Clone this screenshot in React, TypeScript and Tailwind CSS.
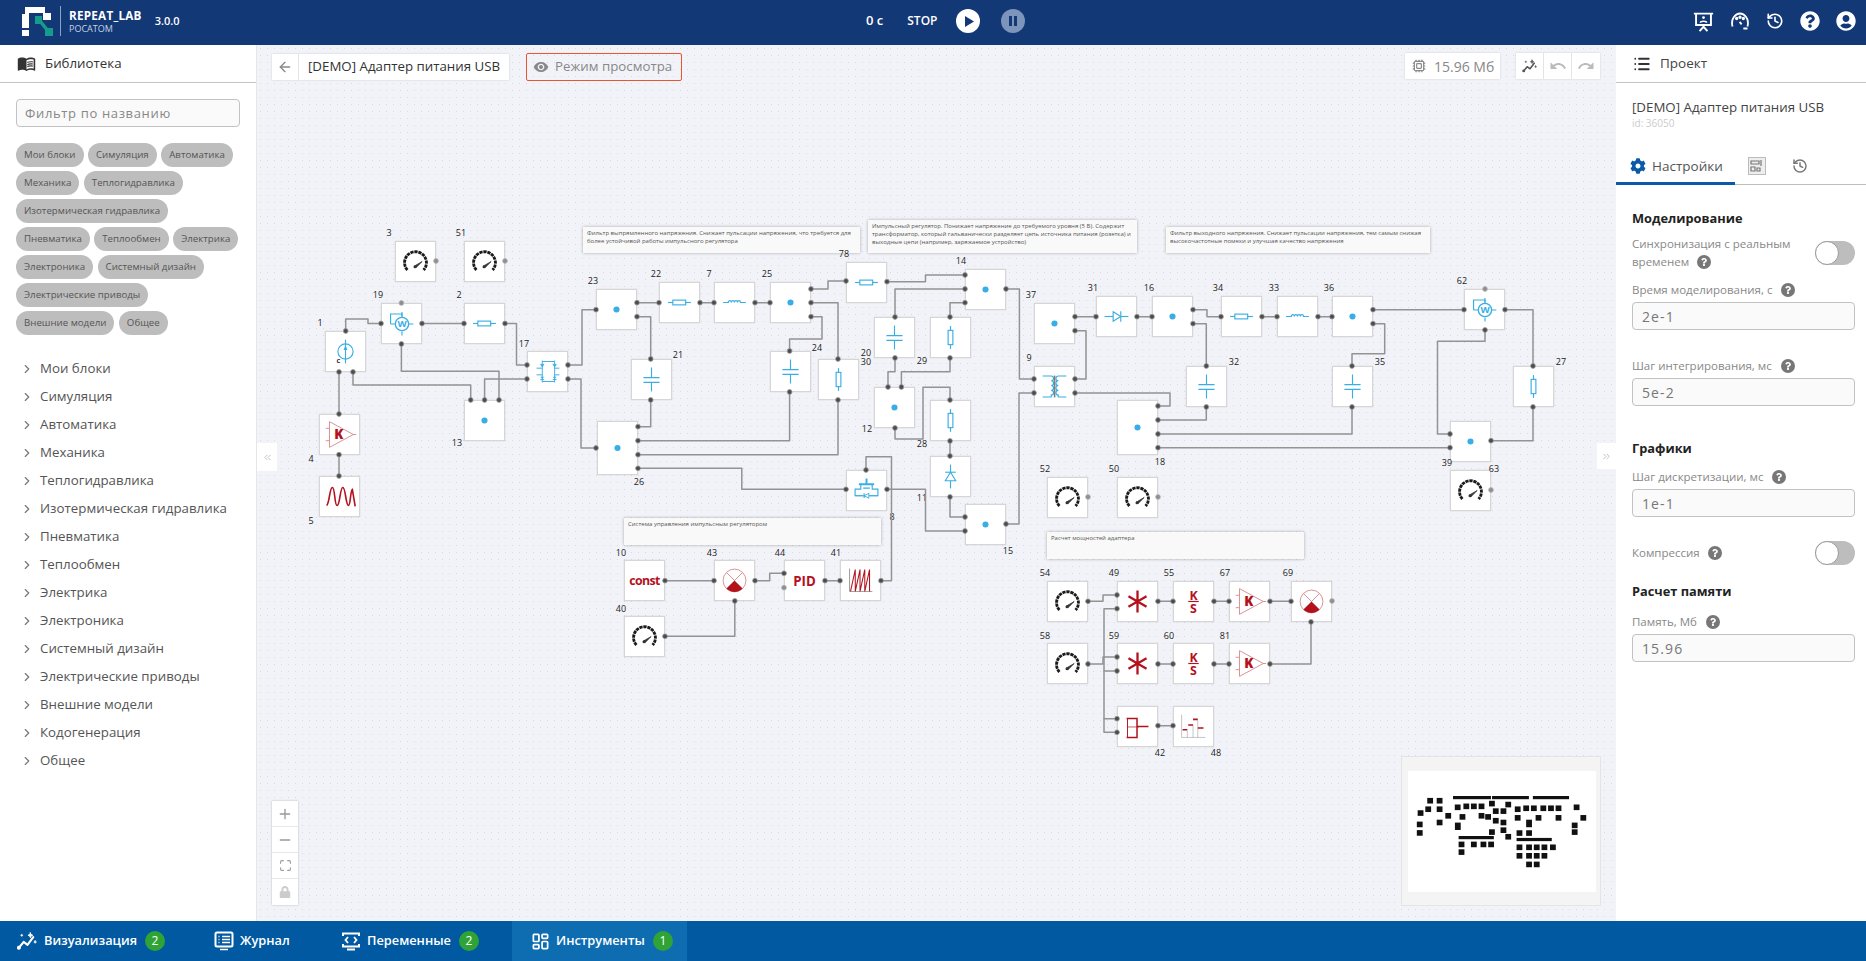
import React from 'react';
import {
  ArrowLeft,
  ChevronRight,
  ChevronsLeft,
  ChevronsRight,
  Cpu,
  History,
  LayoutDashboard,
  List,
  Maximize,
  Minus,
  Plus,
} from 'lucide-react';
import { FaQuestionCircle, FaUserCircle, FaCog, FaQuestion, FaLock } from 'react-icons/fa';
import { MdMenuBook, MdRedo, MdUndo, MdVisibility } from 'react-icons/md';

const OX = 257;
const OY = 45;
const BLUE = '#39aee4';
const RED = '#b3121d';
const PINK = '#d68f92';

const chips = [
  'Мои блоки', 'Симуляция', 'Автоматика', 'Механика', 'Теплогидравлика', 'Изотермическая гидравлика',
  'Пневматика', 'Теплообмен', 'Электрика', 'Электроника', 'Системный дизайн', 'Электрические приводы',
  'Внешние модели', 'Общее',
];

const tree = [
  'Мои блоки', 'Симуляция', 'Автоматика', 'Механика', 'Теплогидравлика', 'Изотермическая гидравлика',
  'Пневматика', 'Теплообмен', 'Электрика', 'Электроника', 'Системный дизайн', 'Электрические приводы',
  'Внешние модели', 'Кодогенерация', 'Общее',
];

const Spark = ({ className }: { className?: string }) => (
  <svg viewBox="0 0 22 20" className={className} fill="none" stroke="currentColor" strokeWidth="2.2" strokeLinecap="round" strokeLinejoin="round">
    <path d="M2 17l5-6 4 3 6-8" />
    <circle cx="2" cy="17" r="1" />
    <path d="M14 1.5l.7 1.8 1.8.7-1.8.7-.7 1.8-.7-1.8-1.8-.7 1.8-.7z" strokeWidth="1" fill="currentColor" />
    <path d="M5 3v2M4 4h2" strokeWidth="1" />
    <path d="M19 9.500l.5 1 1 .5-1 .5-.5 1-.5-1-1-.5 1-.5z" strokeWidth=".6" fill="currentColor" />
  </svg>
);

type IconProps = { kind: string };

const L = (p: { d: string; c?: string; w?: number; f?: string }) => (
  <path d={p.d} stroke={p.c ?? BLUE} strokeWidth={p.w ?? 1.2} fill={p.f ?? 'none'} />
);

const NodeIcon = ({ kind }: IconProps) => {
  switch (kind) {
    case 'dot':
      return <circle cx="20.5" cy="20.5" r="3.2" fill={BLUE} />;
    case 'gauge':
      return (
        <g>
          <path d="M12 29.5A11.5 11.5 0 1 1 29 29.5" fill="none" stroke="#1a1a1a" strokeWidth="3" strokeDasharray="3.4 .8" />
          <path d="M19 25.5L27.500 20.5L21 27z" fill="#333" stroke="#333" strokeWidth=".8" />
          <circle cx="20" cy="26" r="1.6" fill="#333" />
        </g>
      );
    case 'res':
      return (
        <g>
          <L d="M8.5 20.5H32.5" />
          <rect x="13.5" y="18" width="13.5" height="5" fill="#fff" stroke={BLUE} strokeWidth="1.2" />
        </g>
      );
    case 'resV':
      return (
        <g>
          <L d="M20.5 8.5V32.5" />
          <rect x="18" y="13" width="5" height="15" fill="#fff" stroke={BLUE} strokeWidth="1.2" />
        </g>
      );
    case 'ind':
      return <L d="M8.5 20.5H14a1.6 2 0 0 1 3.2 0a1.6 2 0 0 1 3.2 0a1.6 2 0 0 1 3.2 0a1.6 2 0 0 1 3.2 0H32.5" />;
    case 'cap':
      return (
        <g>
          <L d="M20.5 8V18.500M20.5 23.500V33" />
          <L d="M12 18.500H29M12 23.500H29" w={1.4} />
        </g>
      );
    case 'diodeH':
      return (
        <g>
          <L d="M8 20.5H33" />
          <path d="M17 15.5L25 20.5L17 25.5z" fill="#fff" stroke={BLUE} strokeWidth="1.2" />
          <L d="M25 15V26" />
        </g>
      );
    case 'diodeV':
      return (
        <g>
          <L d="M20.5 8V33" />
          <path d="M20.5 16L26 25H15z" fill="#fff" stroke={BLUE} strokeWidth="1.2" />
          <L d="M15 16H26" />
        </g>
      );
    case 'source':
      return (
        <g>
          <circle cx="20.5" cy="20.5" r="8" fill="#fff" stroke={BLUE} strokeWidth="1.2" />
          <L d="M20.5 8V33" />
          <path d="M20.5 14L18.5 19H22.5z" fill={BLUE} />
          <text x="11" y="33" fontSize="8" fill="#111" fontWeight="600">c</text>
        </g>
      );
    case 'watt':
      return (
        <g>
          <L d="M9 21H33M21 8.5V13M21 29V33" />
          <L d="M9 21V10.5H21V14" />
          <circle cx="21" cy="21" r="7" fill="#fff" stroke={BLUE} strokeWidth="1.4" />
          <text x="21" y="24.5" fontSize="10" fontWeight="700" fill={BLUE} textAnchor="middle">W</text>
        </g>
      );
    case 'bridge':
      return (
        <g>
          <L d="M15 10H28M15 31H28M15 9V32M28 9V32M9 17H15M9 24H15M28 17H33M28 24H33" w={1} />
          <path d="M13 13.500h4l-2 2.500zM26 13.500h4l-2 2.500zM13 26h4l-2 2.500zM26 26h4l-2 2.500z" fill={BLUE} />
          <L d="M13 13H17M26 13H30M13 29H17M26 29H30" w={1} />
        </g>
      );
    case 'trans':
      return (
        <g>
          <L d="M8 9.500H17M17 9.500a2.500 2.500 0 0 1 0 5a2.500 2.500 0 0 1 0 5a2.500 2.500 0 0 1 0 5a2.500 2.500 0 0 1 0 5a2.500 2.500 0 0 1 0 2H8" />
          <L d="M33 9.500H24.500M24.500 9.500a2.500 2.500 0 0 0 0 5a2.500 2.500 0 0 0 0 5a2.500 2.500 0 0 0 0 5a2.500 2.500 0 0 0 0 5a2.500 2.500 0 0 0 0 2H33" />
          <rect x="19.800" y="9" width="1.600" height="23" fill="#7d7d7d" />
        </g>
      );
    case 'fet':
      return (
        <g>
          <L d="M20.5 8V14M12.500 14H28.500" w={2} />
          <L d="M14.500 14V19H8.500V26H32.500V19H26.500V14M17 18H24" />
          <path d="M23 23.500L18 26L23 28.500z" fill="#fff" stroke={BLUE} strokeWidth="1" />
          <L d="M18 23.500V28.500M8.500 26H17M24 26H32.500" />
        </g>
      );
    case 'gain':
      return (
        <g>
          <L d="M6 14H10M6 27H10M34 20.500H38" c={PINK} w={1} />
          <path d="M10 7L35 20.500L10 34z" fill="#fff" stroke={PINK} strokeWidth="1" />
          <text x="15" y="25.500" fontSize="14" fontWeight="800" fill={RED}>K</text>
        </g>
      );
    case 'wave':
      return <L d="M7 30C10 28 10 11 13 11C16 11 15 30 18 30C21 30 21 11 24 11C27 11 27 30 30 30C32 30 32 14 34 13L37 31" c={RED} w={1.7} />;
    case 'const':
      return <text x="20.5" y="25" fontSize="13" fontWeight="700" fill={RED} textAnchor="middle" letterSpacing="-.7">const</text>;
    case 'pid':
      return <text x="20.5" y="26" fontSize="14" fontWeight="700" fill={RED} textAnchor="middle">PID</text>;
    case 'sum':
      return (
        <g>
          <circle cx="20.5" cy="20.5" r="12" fill="#fff" stroke={PINK} strokeWidth="1" />
          <L d="M12 12L20.5 20.5L29 12" c={PINK} w={1} />
          <path d="M20.5 20.5L12 29A12 12 0 0 0 29 29z" fill={RED} />
        </g>
      );
    case 'mul':
      return <L d="M20.5 9V32M11 15L30 26M30 15L11 26" c={RED} w={2.4} />;
    case 'ks':
      return (
        <g>
          <text x="20.5" y="18.5" fontSize="13" fontWeight="700" fill={RED} textAnchor="middle">K</text>
          <L d="M15 20.5H26" c={RED} w={1.2} />
          <text x="20.5" y="33" fontSize="13" fontWeight="700" fill={RED} textAnchor="middle">S</text>
        </g>
      );
    case 'saw':
      return (
        <g>
          <L d="M9 8V32H33" c="#555" w={.6} />
          <L d="M10 32L15 9V32L20 9V32L25 9V32L30 9V32" c={RED} w={1.1} />
        </g>
      );
    case 'quant':
      return (
        <g>
          <L d="M9 12H20V32H9M20 20.5H32" c={RED} w={1.6} />
          <L d="M10 12V32" c={RED} w={1} />
          <L d="M10 21H22" c={RED} w={.7} />
        </g>
      );
    case 'stair':
      return (
        <g>
          <L d="M8 8V32H33M14 32V25M20 32V19M25 32V14" c="#9a9a9a" w={.6} />
          <L d="M9 24H14M15 19H20M20 13H25M25 22H31" c={RED} w={1.6} />
        </g>
      );
    default:
      return null;
  }
};

// lx is the centre of the number, ly its vertical middle
type NodeT = { id: string; x: number; y: number; h?: number; lx: number; ly: number; k: string };

const nodes: NodeT[] = [
  { id: '3', x: 395, y: 241, lx: 389, ly: 233, k: 'gauge' },
  { id: '51', x: 464, y: 241, lx: 461, ly: 233, k: 'gauge' },
  { id: '19', x: 381, y: 303, lx: 378, ly: 295, k: 'watt' },
  { id: '2', x: 464, y: 303, lx: 459, ly: 295, k: 'res' },
  { id: '1', x: 325, y: 331, lx: 320, ly: 323, k: 'source' },
  { id: '17', x: 527, y: 351, lx: 524, ly: 344, k: 'bridge' },
  { id: '13', x: 464, y: 400, lx: 457, ly: 443, k: 'dot' },
  { id: '4', x: 319, y: 414, lx: 311, ly: 459, k: 'gain' },
  { id: '5', x: 319, y: 476, lx: 311, ly: 521, k: 'wave' },
  { id: '23', x: 596, y: 289, lx: 593, ly: 281, k: 'dot' },
  { id: '22', x: 659, y: 282, lx: 656, ly: 274, k: 'res' },
  { id: '7', x: 714, y: 282, lx: 709, ly: 274, k: 'ind' },
  { id: '25', x: 770, y: 282, lx: 767, ly: 274, k: 'dot' },
  { id: '78', x: 846, y: 262, lx: 844, ly: 254, k: 'res' },
  { id: '21', x: 631, y: 359, lx: 678, ly: 355, k: 'cap' },
  { id: '26', x: 597, y: 421, h: 54, lx: 639, ly: 482, k: 'dot' },
  { id: '24', x: 770, y: 351, lx: 817, ly: 348, k: 'cap' },
  { id: '20', x: 818, y: 359, lx: 866, ly: 353, k: 'resV' },
  { id: '8', x: 846, y: 470, lx: 892, ly: 517, k: 'fet' },
  { id: '14', x: 965, y: 269, lx: 961, ly: 261, k: 'dot' },
  { id: '30', x: 874, y: 317, lx: 866, ly: 362, k: 'cap' },
  { id: '29', x: 930, y: 317, lx: 922, ly: 361, k: 'resV' },
  { id: '12', x: 874, y: 387, lx: 867, ly: 429, k: 'dot' },
  { id: '28', x: 930, y: 400, lx: 922, ly: 444, k: 'resV' },
  { id: '11', x: 930, y: 456, lx: 922, ly: 498, k: 'diodeV' },
  { id: '15', x: 965, y: 504, lx: 1008, ly: 551, k: 'dot' },
  { id: '37', x: 1034, y: 303, lx: 1031, ly: 295, k: 'dot' },
  { id: '9', x: 1034, y: 366, lx: 1029, ly: 358, k: 'trans' },
  { id: '31', x: 1096, y: 296, lx: 1093, ly: 288, k: 'diodeH' },
  { id: '16', x: 1152, y: 296, lx: 1149, ly: 288, k: 'dot' },
  { id: '34', x: 1221, y: 296, lx: 1218, ly: 288, k: 'res' },
  { id: '33', x: 1277, y: 296, lx: 1274, ly: 288, k: 'ind' },
  { id: '36', x: 1332, y: 296, lx: 1329, ly: 288, k: 'dot' },
  { id: '62', x: 1464, y: 289, lx: 1462, ly: 281, k: 'watt' },
  { id: '32', x: 1186, y: 366, lx: 1234, ly: 362, k: 'cap' },
  { id: '35', x: 1332, y: 366, lx: 1380, ly: 362, k: 'cap' },
  { id: '27', x: 1513, y: 366, lx: 1561, ly: 362, k: 'resV' },
  { id: '18', x: 1117, y: 400, h: 55, lx: 1160, ly: 462, k: 'dot' },
  { id: '39', x: 1450, y: 421, lx: 1447, ly: 463, k: 'dot' },
  { id: '63', x: 1450, y: 470, lx: 1494, ly: 469, k: 'gauge' },
  { id: '52', x: 1047, y: 477, lx: 1045, ly: 469, k: 'gauge' },
  { id: '50', x: 1117, y: 477, lx: 1114, ly: 469, k: 'gauge' },
  { id: '10', x: 624, y: 560, lx: 621, ly: 553, k: 'const' },
  { id: '43', x: 714, y: 560, lx: 712, ly: 553, k: 'sum' },
  { id: '44', x: 784, y: 560, lx: 780, ly: 553, k: 'pid' },
  { id: '41', x: 840, y: 560, lx: 836, ly: 553, k: 'saw' },
  { id: '40', x: 624, y: 616, lx: 621, ly: 609, k: 'gauge' },
  { id: '54', x: 1047, y: 581, lx: 1045, ly: 573, k: 'gauge' },
  { id: '49', x: 1117, y: 581, lx: 1114, ly: 573, k: 'mul' },
  { id: '55', x: 1173, y: 581, lx: 1169, ly: 573, k: 'ks' },
  { id: '67', x: 1229, y: 581, lx: 1225, ly: 573, k: 'gain' },
  { id: '69', x: 1291, y: 581, lx: 1288, ly: 573, k: 'sum' },
  { id: '58', x: 1047, y: 643, lx: 1045, ly: 636, k: 'gauge' },
  { id: '59', x: 1117, y: 643, lx: 1114, ly: 636, k: 'mul' },
  { id: '60', x: 1173, y: 643, lx: 1169, ly: 636, k: 'ks' },
  { id: '81', x: 1229, y: 643, lx: 1225, ly: 636, k: 'gain' },
  { id: '42', x: 1117, y: 706, lx: 1160, ly: 753, k: 'quant' },
  { id: '48', x: 1173, y: 706, lx: 1216, ly: 753, k: 'stair' },
];

const comments = [
  { x: 583, y: 227, w: 277, h: 26, t: 'Фильтр выпрямленного напряжения. Снижает пульсации напряжения, что требуется для более устойчивой работы импульсного регулятора' },
  { x: 868, y: 220, w: 269, h: 33, t: 'Импульсный регулятор. Понижает напряжение до требуемого уровня (5 В). Содержит трансформатор, который гальванически разделяет цепь источника питания (розетка) и выходные цепи (например, заряжаемое устройство)' },
  { x: 1166, y: 227, w: 264, h: 26, t: 'Фильтр выходного напряжения. Снижает пульсации напряжения, тем самым снижая высокочастотные помехи и улучшая качество напряжения' },
  { x: 624, y: 518, w: 257, h: 27, t: 'Система управления импульсным регулятором' },
  { x: 1047, y: 532, w: 257, h: 27, t: 'Расчет мощностей адаптера' },
];

const wires = [
  'M345.7 331V319H368V323.5H381',
  'M422 323.5H464',
  'M505 323.5H516.5V365H527',
  'M527 379H484.6V400',
  'M401.4 344V371.3H499V400',
  'M353 372V385H470.7V400',
  'M339 372V414',
  'M339 454.7V476',
  'M568 365H582V309.7H596',
  'M568 379H581V448H596',
  'M637 302.7H659',
  'M700 302.7H714',
  'M755 302.7H770',
  'M811 289H828V281H846',
  'M811 302.7H838V359',
  'M811 316.7H822V339H789.6V351',
  'M637 316.7H650.7V359',
  'M650.7 400V426.7H638',
  'M789.6 392V440.7H638',
  'M838 400V454.7H638',
  'M638 468.3H741.8V489.3H846',
  'M887 281.7H925.5V275H965',
  'M965 289H895V317',
  'M965 302.7H950V317',
  'M895 358V371.7H888V387',
  'M950 358V371.7H901.4V387',
  'M895 428V439H923V387.3H950V400',
  'M950 441V456',
  'M950 497V517H965',
  'M887 489.3H925.5V531H965',
  'M866 470V456.7H891.5V580.7H881',
  'M1006 524H1019V393H1034',
  'M1006 289H1019.4V379H1034',
  'M1075 316.7H1096',
  'M1075 330.7H1086V379H1075',
  'M1075 393H1170V406H1158',
  'M1137 316.7H1152',
  'M1193 309.7H1207V316.7H1221',
  'M1193 323.7H1206.3V366',
  'M1262 316.7H1277',
  'M1318 316.7H1332',
  'M1373 309.7H1464',
  'M1373 323.7H1384.7V353.7H1352V366',
  'M1505 309.7H1533V366',
  'M1485 330V341.3H1437.5V434H1450',
  'M1206.3 407V420H1158',
  'M1352 407V434H1158',
  'M1158 447.7H1450',
  'M1533 407V440.7H1491',
  'M665 580.7H714',
  'M755 580.7H769.7V573.3H784',
  'M825 580.7H840',
  'M665 636.3H734.8V601',
  'M1088 601.3H1103V595H1117',
  'M1117 608.7H1104V732.3H1117',
  'M1088 664H1103V657H1117',
  'M1158 601.3H1173',
  'M1214 601.3H1229',
  'M1270 601.3H1291',
  'M1311 622V664H1270',
  'M1158 664H1173',
  'M1214 664H1229',
  'M1158 725.7H1173',
];

// start port only, the other end joins the bus
const tees = ['M1117 671H1104', 'M1117 718.7H1104'];

const freePorts = [
  [436, 261], [505, 261], [1088, 497], [1158, 497], [1491, 490], [1332, 601], [784, 587.7], [401.4, 303], [1485, 289],
];

const parsePath = (d: string) => {
  const pts: [number, number][] = [];
  let x = 0;
  let y = 0;
  for (const m of d.matchAll(/([MHV])([\d. ]+)/g)) {
    const v = m[2].trim().split(' ').map(Number);
    if (m[1] === 'M') { x = v[0]; y = v[1]; }
    if (m[1] === 'H') x = v[0];
    if (m[1] === 'V') y = v[0];
    pts.push([x, y]);
  }
  return pts;
};

const Diagram = () => (
  <>
    {comments.map((c) => (
      <div
        key={c.t}
        className="absolute bg-[#f9f9f9] shadow-[0_0_3px_rgba(0,0,0,0.3)] px-[4px] py-[2px] text-[6px] leading-[8px] text-[#555]"
        style={{ left: c.x - OX, top: c.y - OY, width: c.w, height: c.h }}
      >
        {c.t}
      </div>
    ))}
    {nodes.map((n) => (
      <React.Fragment key={n.id}>
        <div
          className="absolute bg-white border border-[#d6d6d6] shadow-[0_0_1px_rgba(0,0,0,0.2)]"
          style={{ left: n.x - OX, top: n.y - OY, width: 41, height: n.h ?? 41 }}
        >
          <svg viewBox="0 0 41 41" className="h-full w-full font-['Open_Sans',sans-serif]">
            <NodeIcon kind={n.k} />
          </svg>
        </div>
        <span
          className="absolute w-[16px] text-center text-[9px] leading-[8px] text-[#222]"
          style={{ left: n.lx - 8 - OX, top: n.ly - 4 - OY }}
        >
          {n.id}
        </span>
      </React.Fragment>
    ))}
    <svg className="absolute left-0 top-0 h-full w-full pointer-events-none" fill="none">
      <g transform={`translate(${-OX} ${-OY})`}>
        {wires.concat(tees).map((d) => (
          <path key={d} d={d} stroke="#939393" strokeWidth="1.5" strokeLinejoin="round" strokeLinecap="round" />
        ))}
        {wires.map((d) => {
          const p = parsePath(d);
          const a = p[0];
          const b = p[p.length - 1];
          return (
            <g key={d} fill="#4c4c4c" stroke="#9a9a9a" strokeWidth=".8">
              <circle cx={a[0]} cy={a[1]} r="2.4" />
              <circle cx={b[0]} cy={b[1]} r="2.4" />
            </g>
          );
        })}
        {tees.map((d) => {
          const a = parsePath(d)[0];
          return <circle key={d} cx={a[0]} cy={a[1]} r="2.4" fill="#4c4c4c" stroke="#9a9a9a" strokeWidth=".8" />;
        })}
        {freePorts.map(([x, y]) => (
          <circle key={`${x}-${y}`} cx={x} cy={y} r="2.4" fill="#8e8e8e" stroke="#b5b5b5" strokeWidth=".8" />
        ))}
      </g>
    </svg>
  </>
);

const MiniMap = () => {
  const k = 0.137;
  const mx = (x: number) => 1452 + (x - 583) * k - 1407;
  const my = (y: number) => 796 + (y - 227) * k - 771;
  return (
    <div className="absolute right-[15px] bottom-[15px] h-[150px] w-[200px] bg-[#f4f4f4] border border-[#e4e4e4] px-[6px] pt-[14px]">
      <svg className="h-[121px] w-[188px] bg-white">
        {nodes.map((n) => (
          <rect key={n.id} x={mx(n.x)} y={my(n.y)} width={5.8} height={(n.h ?? 41) * k} fill="#111" />
        ))}
        {comments.map((c) => (
          <rect key={c.t} x={mx(c.x)} y={my(c.y + c.h - 26)} width={c.w * k} height={3.2} fill="#111" />
        ))}
      </svg>
    </div>
  );
};

const Help = () => (
  <span className="inline-flex h-[14px] w-[14px] shrink-0 items-center justify-center rounded-full bg-[#777] text-white">
    <FaQuestion className="h-[8px] w-[8px]" />
  </span>
);

const Toggle = () => (
  <div className="h-[24px] w-[40px] shrink-0 rounded-full bg-[#bdbdbd] flex items-center">
    <div className="h-[24px] w-[24px] rounded-full bg-white border border-[#999]" />
  </div>
);

const Field = ({ label, value, mt }: { label: string; value: string; mt: string }) => (
  <div className={mt}>
    <div className="flex h-[18px] items-center gap-[9px] text-[11.5px] text-[#888]">
      {label}
      <Help />
    </div>
    <div className="mt-[3px] flex h-[28px] items-center rounded-[4px] border border-[#c2c2c2] bg-[#fafafa] pl-[9px] text-[14px] tracking-[0.08em] text-[#777]">
      {value}
    </div>
  </div>
);

const Section = ({ title, mt }: { title: string; mt: string }) => (
  <div className={`${mt} h-[20px] text-[12.8px] font-bold leading-[20px] text-[#222]`}>{title}</div>
);

const BottomTab = ({
  icon,
  label,
  badge,
  className,
}: {
  icon: React.ReactNode;
  label: string;
  badge?: number;
  className: string;
}) => (
  <div className={`flex h-full items-center text-[12.8px] font-semibold text-white ${className}`}>
    {icon}
    <span>{label}</span>
    {badge !== undefined && (
      <span className="ml-[8px] flex h-[20px] w-[20px] items-center justify-center rounded-full bg-[#2fa336] text-[12px] font-normal">
        {badge}
      </span>
    )}
  </div>
);

const App: React.FC = () => {
  return (
    <div className="flex h-screen w-full flex-col overflow-hidden bg-white font-['Open_Sans',sans-serif]">
      {/* Header */}
      <header className="relative flex h-[45px] shrink-0 items-center bg-[#133876] pb-[3px] text-white">
        <svg viewBox="0 0 32 32" className="ml-[22px] h-[32px] w-[32px]">
          <path d="M0 9h7v14H0zM3 2h20v6H7v2H3zM21 8h8v7h-8zM0 25h7v6H0z" fill="#fff" />
          <path d="M13 11h7v8h-7zM23 23h8v8h-8z" fill="#159c8c" />
          <path d="M18 16l8 10" stroke="#159c8c" strokeWidth="3.5" />
        </svg>
        <div className="ml-[6px] h-[30px] w-px bg-[#8ea3c4]" />
        <div className="ml-[8px] flex flex-col">
          <span className="text-[11.7px] font-bold leading-[15px] tracking-[0.02em]">REPEAT_LAB</span>
          <span className="text-[9px] leading-[11px] text-[#c8d3e4]">РОСАТОМ</span>
        </div>
        <span className="ml-[13px] text-[11px] font-semibold">3.0.0</span>
        <div className="absolute left-[866px] top-0 flex h-[42px] items-center">
          <span className="text-[13px] font-semibold">0 с</span>
          <span className="ml-[24px] text-[12px] font-semibold">STOP</span>
          <div className="ml-[19px] flex h-[24px] w-[24px] items-center justify-center rounded-full bg-white">
            <svg viewBox="0 0 10 12" className="ml-[2px] h-[11px] w-[9px]"><path d="M0 0l10 6-10 6z" fill="#133876" /></svg>
          </div>
          <div className="ml-[21px] flex h-[24px] w-[24px] items-center justify-center gap-[2px] rounded-full bg-[#7d94bb]">
            <span className="h-[10px] w-[3px] bg-[#133876]" />
            <span className="h-[10px] w-[3px] bg-[#133876]" />
          </div>
        </div>
        <div className="absolute right-[10px] top-0 flex h-[42px] items-center gap-[16px]">
          <svg viewBox="0 0 24 24" className="h-[21px] w-[21px]" fill="none" stroke="currentColor" strokeWidth="2.2">
            <path d="M1 3h22M3.500 3v13h17V3M12 16v2M7.500 23l4.500-5 4.500 5" />
            <circle cx="12" cy="7.500" r="1.600" fill="currentColor" stroke="none" />
            <path d="M8.500 13.500c0-2.500 7-2.500 7 0" strokeWidth="1.800" />
          </svg>
          <svg viewBox="0 0 24 24" className="h-[20px] w-[20px]" fill="none" stroke="currentColor" strokeWidth="2.2">
            <path d="M3 18.500C.500 9 7 3 12 3s11.500 6 9 15.500" />
            <path d="M16 21h5M11.500 13l2.500 3" />
            <circle cx="8" cy="9" r=".9" fill="currentColor" />
            <circle cx="12" cy="7.500" r=".9" fill="currentColor" />
            <circle cx="16" cy="9" r=".9" fill="currentColor" />
          </svg>
          <History className="h-[18px] w-[18px]" strokeWidth={2.2} />
          <FaQuestionCircle className="h-[20px] w-[20px]" />
          <FaUserCircle className="h-[20px] w-[20px]" />
        </div>
      </header>

      <div className="flex min-h-0 flex-1">
        {/* Library */}
        <aside className="w-[257px] shrink-0 border-r border-[#e6e6e6] bg-white">
          <div className="flex h-[38px] items-center gap-[9px] border-b border-[#c4c4c4] pl-[17px] text-[13.3px] text-[#333]">
            <MdMenuBook className="h-[19px] w-[19px] text-[#333]" />
            Библиотека
          </div>
          <div className="mx-[16px] mt-[16px] flex h-[28px] items-center rounded-[4px] border border-[#c2c2c2] bg-[#fafafa] pl-[8px] pt-[1px] text-[13px] tracking-[0.05em] text-[#888]">
            Фильтр по названию
          </div>
          <div className="ml-[16px] mt-[16px] flex w-[225px] flex-wrap gap-x-[4.5px] gap-y-[4px]">
            {chips.map((c) => (
              <span key={c} className="flex h-[24px] items-center rounded-full bg-[#bdbdbd] px-[8px] text-[9.7px] text-[#555]">
                {c}
              </span>
            ))}
          </div>
          <div className="mt-[20px]">
            {tree.map((t) => (
              <div key={t} className="flex h-[28px] items-center pl-[20px] text-[13.3px] text-[#555]">
                <ChevronRight className="h-[14px] w-[14px] text-[#777]" />
                <span className="ml-[6px]">{t}</span>
              </div>
            ))}
          </div>
        </aside>

        {/* Canvas */}
        <main className="relative min-w-0 flex-1 overflow-hidden bg-[#f1f3f8] bg-[radial-gradient(#d9dbe0_0.8px,transparent_0.9px)] bg-[size:7px_7px]">
          <Diagram />

          <div className="absolute left-[15px] top-[9px] flex h-[26px] items-center bg-white shadow-[0_0_2px_rgba(0,0,0,0.15)]">
            <div className="flex h-full w-[27px] items-center justify-center border-r border-[#e4e4e4] text-[#888]">
              <ArrowLeft className="h-[16px] w-[16px]" />
            </div>
            <span className="px-[9px] text-[13.3px] text-[#333]">[DEMO] Адаптер питания USB</span>
          </div>
          <div className="absolute left-[269px] top-[8px] flex h-[28px] w-[156px] items-center gap-[6px] rounded-[2px] border border-[#e8552f] pl-[6px] text-[13.3px] text-[#888]">
            <MdVisibility className="h-[16px] w-[16px] text-[#888]" />
            Режим просмотра
          </div>

          <div className="absolute left-[1148px] top-[8px] flex h-[26px] w-[95px] items-center gap-[8px] bg-white pl-[7px] text-[14px] text-[#888] shadow-[0_0_2px_rgba(0,0,0,0.15)]">
            <Cpu className="h-[14px] w-[14px]" />
            15.96 Мб
          </div>
          <div className="absolute left-[1259px] top-[8px] flex h-[26px] w-[84px] bg-white shadow-[0_0_2px_rgba(0,0,0,0.15)]">
            <div className="flex w-[28px] items-center justify-center border-r border-[#e4e4e4] text-[#555]">
              <Spark className="h-[14px] w-[16px]" />
            </div>
            <div className="flex w-[28px] items-center justify-center border-r border-[#e4e4e4] text-[#bbb]">
              <MdUndo className="h-[18px] w-[18px]" />
            </div>
            <div className="flex w-[28px] items-center justify-center text-[#bbb]">
              <MdRedo className="h-[18px] w-[18px]" />
            </div>
          </div>

          <div className="absolute left-[15px] bottom-[16px] flex w-[26px] flex-col bg-white text-[#999] shadow-[0_0_2px_rgba(0,0,0,0.25)]">
            <div className="flex h-[26px] items-center justify-center border-b border-[#e8e8e8]"><Plus className="h-[16px] w-[16px]" /></div>
            <div className="flex h-[26px] items-center justify-center border-b border-[#e8e8e8]"><Minus className="h-[16px] w-[16px]" /></div>
            <div className="flex h-[26px] items-center justify-center border-b border-[#e8e8e8]"><Maximize className="h-[13px] w-[13px]" /></div>
            <div className="flex h-[26px] items-center justify-center text-[#ccc]"><FaLock className="h-[12px] w-[12px]" /></div>
          </div>

          <div className="absolute left-0 top-[398px] flex h-[28px] w-[20px] items-center justify-center bg-white text-[#bbb]">
            <ChevronsLeft className="h-[11px] w-[11px]" />
          </div>
          <div className="absolute right-0 top-[398px] flex h-[26px] w-[19px] items-center justify-center bg-white text-[#bbb]">
            <ChevronsRight className="h-[11px] w-[11px]" />
          </div>

          <MiniMap />
        </main>

        {/* Project */}
        <aside className="w-[250px] shrink-0 bg-white">
          <div className="flex h-[38px] items-center gap-[9px] border-b border-[#c4c4c4] pl-[17px] text-[13.5px] text-[#444]">
            <List className="h-[18px] w-[18px] text-[#333]" strokeWidth={2.4} />
            Проект
          </div>
          <div className="h-[60px] px-[16px] pt-[14px]">
            <div className="text-[13.3px] leading-[20px] text-[#444]">[DEMO] Адаптер питания USB</div>
            <div className="text-[10px] leading-[12px] text-[#ccc]">id: 36050</div>
          </div>
          <div className="flex h-[42px] items-stretch border-b border-[#bdbdbd]">
            <div className="-mb-px flex w-[119px] items-center gap-[6px] border-b-[3px] border-[#0a5aa8] pl-[14px] pt-[7px] text-[13.5px] text-[#555]">
              <FaCog className="h-[16px] w-[16px] text-[#0a5aa8]" />
              Настройки
            </div>
            <div className="ml-[13px] flex items-center pt-[4px]">
              <div className="flex h-[18px] w-[18px] items-center justify-center border border-[#bbb] bg-[#eee]">
                <svg viewBox="0 0 14 14" className="h-[14px] w-[14px]" fill="none" stroke="#777" strokeWidth="1.2">
                  <path d="M1 2h8v3H1zM11 1v6M1 8h4v4H1zM7 9h3v3H7z" />
                </svg>
              </div>
            </div>
            <div className="ml-[26px] flex items-center pt-[4px] text-[#777]">
              <History className="h-[16px] w-[16px]" strokeWidth={2.2} />
            </div>
          </div>
          <div className="px-[16px] pr-[11px]">
            <Section title="Моделирование" mt="mt-[23px]" />
            <div className="mt-[7px] flex items-center justify-between">
              <div className="w-[165px] text-[11.5px] leading-[18px] text-[#888]">
                Синхронизация с реальным
                <div className="flex items-center gap-[8px]">
                  временем
                  <Help />
                </div>
              </div>
              <Toggle />
            </div>
            <Field label="Время моделирования, с" value="2e-1" mt="mt-[10px]" />
            <Field label="Шаг интегрирования, мс" value="5e-2" mt="mt-[27px]" />
            <Section title="Графики" mt="mt-[32px]" />
            <Field label="Шаг дискретизации, мс" value="1e-1" mt="mt-[10px]" />
            <div className="mt-[24px] flex h-[24px] items-center justify-between text-[11.5px] text-[#888]">
              <div className="flex items-center gap-[8px]">
                Компрессия
                <Help />
              </div>
              <Toggle />
            </div>
            <Section title="Расчет памяти" mt="mt-[16px]" />
            <Field label="Память, Мб" value="15.96" mt="mt-[12px]" />
          </div>
        </aside>
      </div>

      {/* Bottom tabs */}
      <footer className="flex h-[40px] shrink-0 items-center bg-[#0059a1]">
        <BottomTab
          className="w-[214px] pl-[17px]"
          icon={<Spark className="mr-[6px] h-[20px] w-[21px]" />}
          label="Визуализация"
          badge={2}
        />
        <BottomTab
          className="w-[127px]"
          icon={
            <svg viewBox="0 0 20 20" className="mr-[6px] h-[20px] w-[20px]" fill="none" stroke="currentColor" strokeWidth="2">
              <rect x="1.5" y="1.5" width="17" height="14" rx="1.5" />
              <path d="M4.5 5.5h1M8 5.5h8M4.5 8.5h1M8 8.5h8M4.5 11.5h1M8 11.5h8M6 18.5h8" strokeWidth="1.6" />
            </svg>
          }
          label="Журнал"
        />
        <BottomTab
          className="w-[171px]"
          icon={
            <svg viewBox="0 0 20 20" className="mr-[6px] h-[20px] w-[20px]" fill="none" stroke="currentColor" strokeWidth="2">
              <path d="M2 5V2.5h16V5M2 13v2.5h16V13M6 18.5h8" />
              <path d="M7 6L4.5 9 7 12M13 6l2.500 3L13 12" strokeWidth="1.8" />
            </svg>
          }
          label="Переменные"
          badge={2}
        />
        <BottomTab
          className="w-[175px] bg-[#0e6cb0] pl-[19px]"
          icon={<LayoutDashboard className="mr-[6px] h-[19px] w-[19px]" strokeWidth={2.2} />}
          label="Инструменты"
          badge={1}
        />
      </footer>
    </div>
  );
};

export default App;
